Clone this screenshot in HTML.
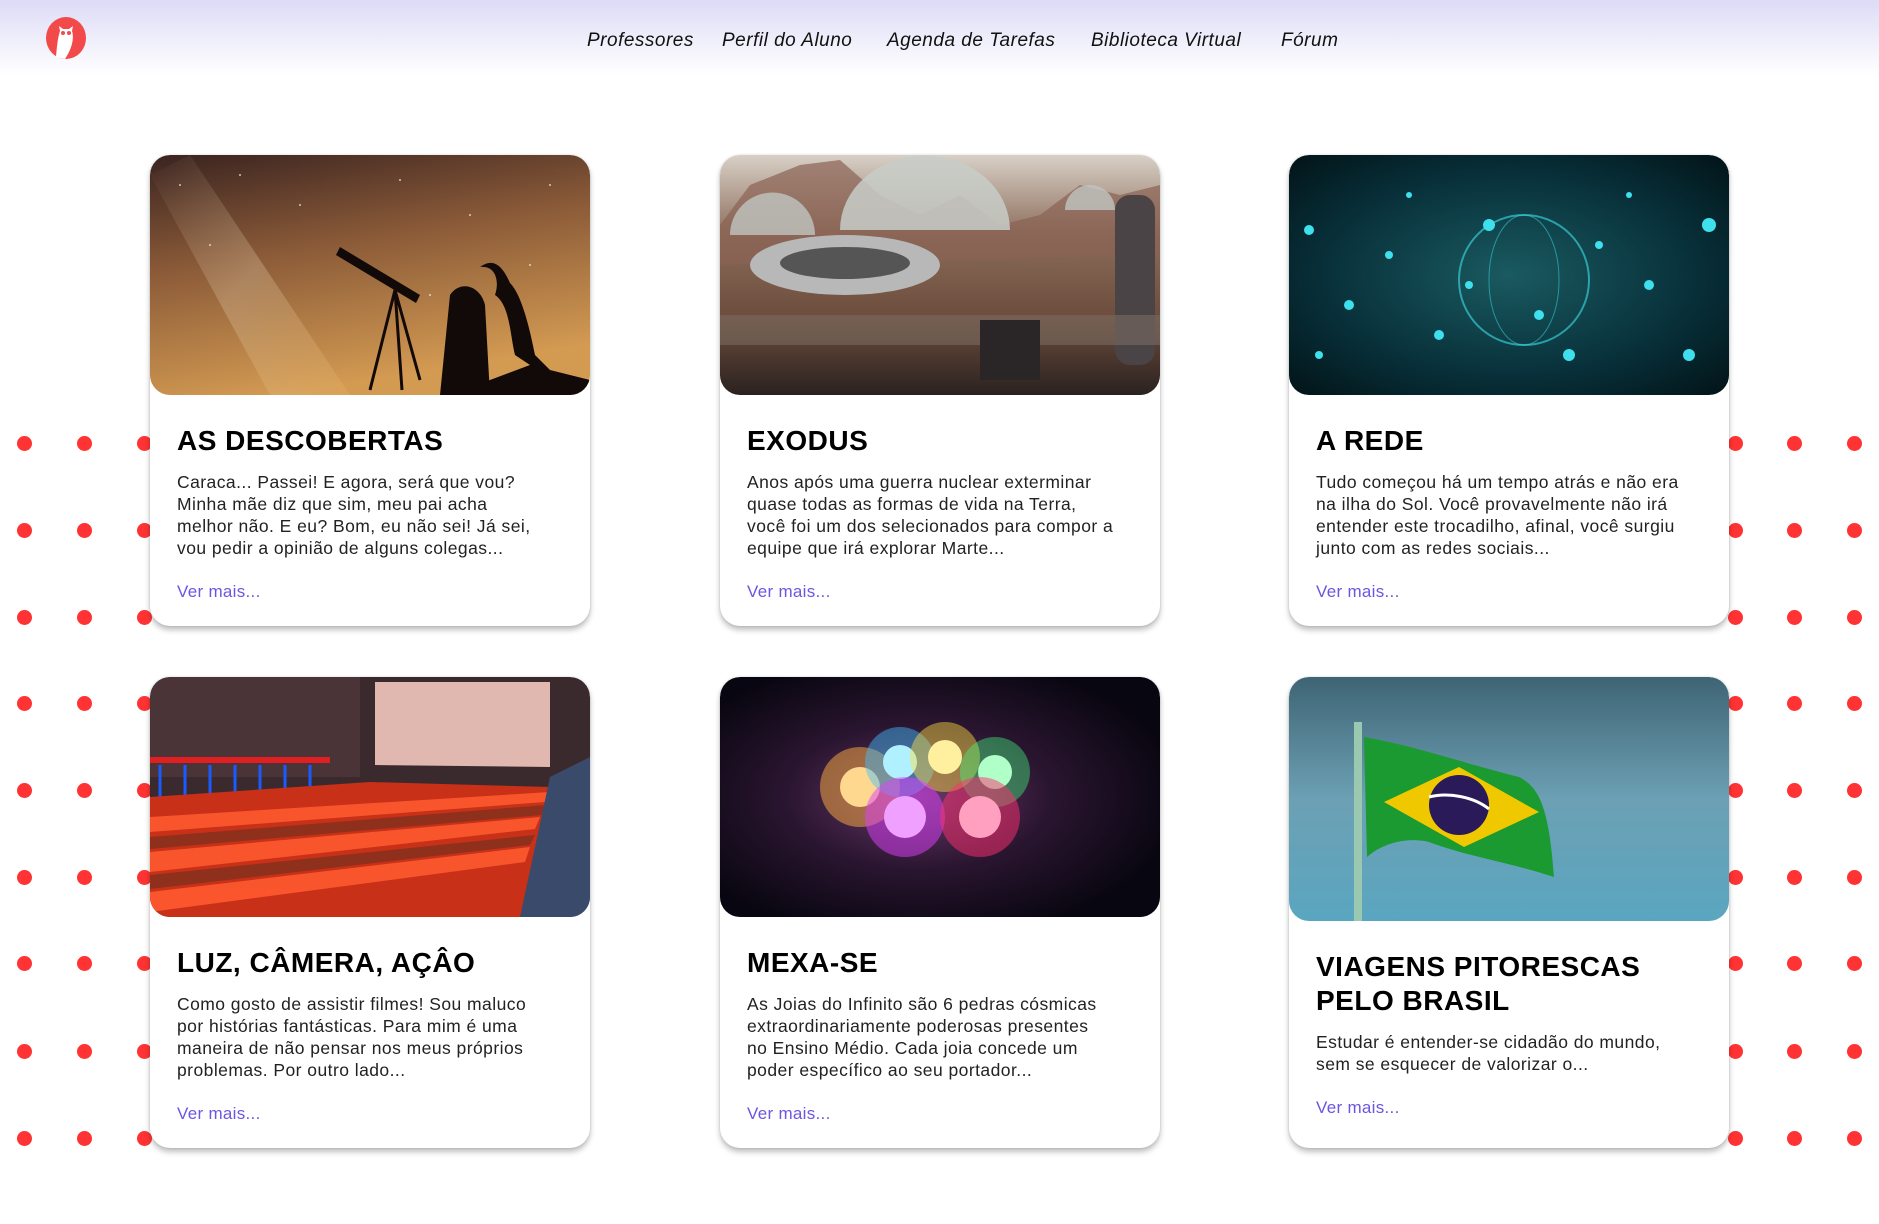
<!DOCTYPE html>
<html><head><meta charset="utf-8"><style>
*{margin:0;padding:0;box-sizing:border-box}
body{width:1879px;height:1224px;overflow:hidden;background:#fff;font-family:"Liberation Sans",sans-serif;position:relative}
.hdr{position:absolute;left:0;top:0;width:1879px;height:75px;background:linear-gradient(#dddbf6,#fff)}
.nav a{position:absolute;top:30px;font-size:19px;font-style:italic;color:#111;text-decoration:none;white-space:nowrap;letter-spacing:.5px}
.dot{position:absolute;width:15px;height:15px;border-radius:50%;background:#ff3333}
.card{position:absolute;width:440px;height:471px;background:#fff;border-radius:20px;box-shadow:0 4px 6px rgba(0,0,0,.25),0 0 2px rgba(0,0,0,.15);overflow:hidden}
.card svg{display:block;border-radius:20px}
.card h2{margin:29px 27px 0;font-size:28px;line-height:34px;font-weight:bold;color:#000;letter-spacing:.5px}
.card p{margin:13px 46px 0 27px;font-size:17.5px;line-height:22px;color:#222;letter-spacing:.45px}
.card .v{margin:22px 27px 22px;font-size:17px;line-height:22px;color:#6e55e0;letter-spacing:.3px}
</style></head><body>
<div class="hdr"></div>
<svg style="position:absolute;left:45px;top:17px" width="42" height="44" viewBox="0 0 42 44">
<ellipse cx="21" cy="21" rx="20" ry="21" fill="#f24a4a"/>
<path d="M11 40 C12 28 13 20 15 14 L14 9 L18 12 L24 12 L28 9 L27 14 C29 20 28 30 20 42 Z" fill="#fff"/>
<circle cx="18" cy="16" r="2" fill="#f24a4a"/><circle cx="24" cy="16" r="2" fill="#f24a4a"/>
</svg>
<div class="nav">
<a style="left:587px">Professores</a>
<a style="left:722px">Perfil do Aluno</a>
<a style="left:887px">Agenda de Tarefas</a>
<a style="left:1091px">Biblioteca Virtual</a>
<a style="left:1281px">Fórum</a>
</div>

<div id="dots">
<div class="dot" style="left:17px;top:436px"></div><div class="dot" style="left:77px;top:436px"></div><div class="dot" style="left:137px;top:436px"></div>
<div class="dot" style="left:17px;top:523px"></div><div class="dot" style="left:77px;top:523px"></div><div class="dot" style="left:137px;top:523px"></div>
<div class="dot" style="left:17px;top:610px"></div><div class="dot" style="left:77px;top:610px"></div><div class="dot" style="left:137px;top:610px"></div>
<div class="dot" style="left:17px;top:696px"></div><div class="dot" style="left:77px;top:696px"></div><div class="dot" style="left:137px;top:696px"></div>
<div class="dot" style="left:17px;top:783px"></div><div class="dot" style="left:77px;top:783px"></div><div class="dot" style="left:137px;top:783px"></div>
<div class="dot" style="left:17px;top:870px"></div><div class="dot" style="left:77px;top:870px"></div><div class="dot" style="left:137px;top:870px"></div>
<div class="dot" style="left:17px;top:956px"></div><div class="dot" style="left:77px;top:956px"></div><div class="dot" style="left:137px;top:956px"></div>
<div class="dot" style="left:17px;top:1044px"></div><div class="dot" style="left:77px;top:1044px"></div><div class="dot" style="left:137px;top:1044px"></div>
<div class="dot" style="left:17px;top:1131px"></div><div class="dot" style="left:77px;top:1131px"></div><div class="dot" style="left:137px;top:1131px"></div>
<div class="dot" style="left:1728px;top:436px"></div><div class="dot" style="left:1787px;top:436px"></div><div class="dot" style="left:1847px;top:436px"></div>
<div class="dot" style="left:1728px;top:523px"></div><div class="dot" style="left:1787px;top:523px"></div><div class="dot" style="left:1847px;top:523px"></div>
<div class="dot" style="left:1728px;top:610px"></div><div class="dot" style="left:1787px;top:610px"></div><div class="dot" style="left:1847px;top:610px"></div>
<div class="dot" style="left:1728px;top:696px"></div><div class="dot" style="left:1787px;top:696px"></div><div class="dot" style="left:1847px;top:696px"></div>
<div class="dot" style="left:1728px;top:783px"></div><div class="dot" style="left:1787px;top:783px"></div><div class="dot" style="left:1847px;top:783px"></div>
<div class="dot" style="left:1728px;top:870px"></div><div class="dot" style="left:1787px;top:870px"></div><div class="dot" style="left:1847px;top:870px"></div>
<div class="dot" style="left:1728px;top:956px"></div><div class="dot" style="left:1787px;top:956px"></div><div class="dot" style="left:1847px;top:956px"></div>
<div class="dot" style="left:1728px;top:1044px"></div><div class="dot" style="left:1787px;top:1044px"></div><div class="dot" style="left:1847px;top:1044px"></div>
<div class="dot" style="left:1728px;top:1131px"></div><div class="dot" style="left:1787px;top:1131px"></div><div class="dot" style="left:1847px;top:1131px"></div>
</div>

<!-- Card 1 -->
<div class="card" style="left:150px;top:155px">
<svg width="440" height="240" viewBox="0 0 440 240" preserveAspectRatio="none">
<defs><linearGradient id="g1" x1="0" y1="0" x2="0.3" y2="1"><stop offset="0" stop-color="#3a2320"/><stop offset=".45" stop-color="#8a5a38"/><stop offset="1" stop-color="#d39a52"/></linearGradient>
<linearGradient id="mw" x1="0" y1="0" x2="1" y2="1"><stop offset="0" stop-color="#c8b090" stop-opacity=".0"/><stop offset=".5" stop-color="#d8c0a0" stop-opacity=".35"/><stop offset="1" stop-color="#f0c070" stop-opacity=".2"/></linearGradient></defs>
<rect width="440" height="240" fill="url(#g1)"/>
<path d="M0 20 L120 240 L200 240 L40 0 Z" fill="url(#mw)"/>
<g fill="#fff" opacity=".7"><circle cx="30" cy="30" r="1"/><circle cx="90" cy="20" r="1"/><circle cx="150" cy="50" r="1"/><circle cx="250" cy="25" r="1"/><circle cx="320" cy="60" r="1"/><circle cx="400" cy="30" r="1"/><circle cx="380" cy="110" r="1"/><circle cx="60" cy="90" r="1"/><circle cx="200" cy="100" r="1"/><circle cx="280" cy="140" r="1"/></g>
<path d="M190 92 L270 140 L266 148 L186 100 Z" fill="#120a08"/>
<path d="M245 135 L220 235 M245 135 L252 235 M245 135 L270 225" stroke="#120a08" stroke-width="3"/>
<path d="M330 112 C345 110 350 125 345 140 C360 150 360 180 365 200 L380 210 L300 240 L440 240 L440 225 L400 215 L385 200 C380 175 372 140 360 128 C350 105 340 105 330 112 Z" fill="#120a08"/>
<path d="M300 140 C310 125 330 130 335 150 L340 240 L290 240 Z" fill="#120a08"/>
</svg>
<h2>AS DESCOBERTAS</h2>
<p>Caraca... Passei! E agora, será que vou? Minha mãe diz que sim, meu pai acha melhor não. E eu? Bom, eu não sei! Já sei, vou pedir a opinião de alguns colegas...</p>
<div class="v">Ver mais...</div>
</div>

<!-- Card 2 -->
<div class="card" style="left:720px;top:155px">
<svg width="440" height="240" viewBox="0 0 440 240" preserveAspectRatio="none">
<defs><linearGradient id="g2" x1="0" y1="0" x2="0" y2="1"><stop offset="0" stop-color="#d8d0c6"/><stop offset=".35" stop-color="#8a6a58"/><stop offset=".7" stop-color="#6a4a3a"/><stop offset="1" stop-color="#2a2220"/></linearGradient></defs>
<rect width="440" height="240" fill="url(#g2)"/>
<path d="M0 70 L30 30 L80 10 L120 5 L160 40 L200 60 L240 40 L280 70 L320 60 L360 30 L400 40 L440 30 L440 100 L0 110 Z" fill="#8a6254" opacity=".7"/>
<ellipse cx="125" cy="110" rx="95" ry="30" fill="#b8b8b8"/><ellipse cx="125" cy="108" rx="65" ry="16" fill="#555"/>
<path d="M120 75 A80 70 0 0 1 290 75 Z" fill="#c8ccc8" opacity=".85"/>
<path d="M10 80 A42 42 0 0 1 95 80 Z" fill="#c0c4c0" opacity=".8"/>
<path d="M345 55 A25 25 0 0 1 395 55 Z" fill="#c0c4c0" opacity=".8"/>
<rect x="395" y="40" width="40" height="170" rx="15" fill="#4a4446"/>
<rect x="0" y="160" width="440" height="30" fill="#7a6a60" opacity=".6"/>
<rect x="260" y="165" width="60" height="60" fill="#2a2628"/>
</svg>
<h2>EXODUS</h2>
<p>Anos após uma guerra nuclear exterminar quase todas as formas de vida na Terra, você foi um dos selecionados para compor a equipe que irá explorar Marte...</p>
<div class="v">Ver mais...</div>
</div>

<!-- Card 3 -->
<div class="card" style="left:1289px;top:155px">
<svg width="440" height="240" viewBox="0 0 440 240" preserveAspectRatio="none">
<defs><radialGradient id="g3" cx=".5" cy=".5" r=".7"><stop offset="0" stop-color="#1a5a60"/><stop offset=".6" stop-color="#08303a"/><stop offset="1" stop-color="#021418"/></radialGradient></defs>
<rect width="440" height="240" fill="url(#g3)"/>
<circle cx="235" cy="125" r="65" fill="none" stroke="#3ee0e8" stroke-width="2" opacity=".6"/>
<ellipse cx="235" cy="125" rx="35" ry="65" fill="none" stroke="#3ee0e8" stroke-width="1" opacity=".5"/>
<g fill="#3ee0ee"><circle cx="20" cy="75" r="5"/><circle cx="60" cy="150" r="5"/><circle cx="100" cy="100" r="4"/><circle cx="150" cy="180" r="5"/><circle cx="200" cy="70" r="6"/><circle cx="280" cy="200" r="6"/><circle cx="310" cy="90" r="4"/><circle cx="360" cy="130" r="5"/><circle cx="400" cy="200" r="6"/><circle cx="420" cy="70" r="7"/><circle cx="180" cy="130" r="4"/><circle cx="250" cy="160" r="5"/><circle cx="340" cy="40" r="3"/><circle cx="30" cy="200" r="4"/><circle cx="120" cy="40" r="3"/></g>
</svg>
<h2>A REDE</h2>
<p>Tudo começou há um tempo atrás e não era na ilha do Sol. Você provavelmente não irá entender este trocadilho, afinal, você surgiu junto com as redes sociais...</p>
<div class="v">Ver mais...</div>
</div>

<!-- Card 4 -->
<div class="card" style="left:150px;top:677px">
<svg width="440" height="240" viewBox="0 0 440 240" preserveAspectRatio="none">
<rect width="440" height="240" fill="#3a2a2e"/>
<rect x="0" y="0" width="210" height="100" fill="#4a3438"/>
<path d="M225 5 L400 5 L400 90 L225 88 Z" fill="#e0b8b0"/>
<rect x="0" y="80" width="180" height="6" fill="#e02020"/>
<g stroke="#1a5aff" stroke-width="3"><path d="M10 88 V120 M35 88 V120 M60 88 V118 M85 88 V118 M110 88 V115 M135 88 V115 M160 88 V112"/></g>
<path d="M0 120 L220 105 L400 110 L380 240 L0 240 Z" fill="#c83018"/>
<g fill="#ff5a30" opacity=".9"><path d="M0 140 L400 115 L395 125 L0 155 Z"/><path d="M0 175 L390 140 L385 152 L0 195 Z"/><path d="M0 215 L380 170 L375 185 L0 235 Z"/></g>
<g fill="#6a3020" opacity=".6"><path d="M0 160 L395 128 L392 138 L0 172Z"/><path d="M0 198 L385 158 L380 168 L0 212Z"/></g>
<path d="M400 100 L440 80 L440 240 L370 240 Z" fill="#3a4a6a"/>
</svg>
<h2>LUZ, CÂMERA, AÇÂO</h2>
<p>Como gosto de assistir filmes! Sou maluco por histórias fantásticas. Para mim é uma maneira de não pensar nos meus próprios problemas. Por outro lado...</p>
<div class="v">Ver mais...</div>
</div>

<!-- Card 5 -->
<div class="card" style="left:720px;top:677px">
<svg width="440" height="240" viewBox="0 0 440 240" preserveAspectRatio="none">
<defs><radialGradient id="g5" cx=".45" cy=".5" r=".6"><stop offset="0" stop-color="#6a3a6a"/><stop offset=".5" stop-color="#2a1530"/><stop offset="1" stop-color="#080610"/></radialGradient></defs>
<rect width="440" height="240" fill="url(#g5)"/>
<circle cx="140" cy="110" r="40" fill="#ffb040" opacity=".5"/><circle cx="140" cy="110" r="20" fill="#ffd890"/>
<circle cx="180" cy="85" r="35" fill="#40c0ff" opacity=".45"/><circle cx="180" cy="85" r="17" fill="#b0f0ff"/>
<circle cx="225" cy="80" r="35" fill="#ffe040" opacity=".45"/><circle cx="225" cy="80" r="17" fill="#fff0a0"/>
<circle cx="275" cy="95" r="35" fill="#40ff80" opacity=".4"/><circle cx="275" cy="95" r="17" fill="#b0ffc8"/>
<circle cx="185" cy="140" r="40" fill="#e040ff" opacity=".5"/><circle cx="185" cy="140" r="21" fill="#f0a0ff"/>
<circle cx="260" cy="140" r="40" fill="#ff3070" opacity=".5"/><circle cx="260" cy="140" r="21" fill="#ffa0c0"/>
</svg>
<h2>MEXA-SE</h2>
<p>As Joias do Infinito são 6 pedras cósmicas extraordinariamente poderosas presentes no Ensino Médio. Cada joia concede um poder específico ao seu portador...</p>
<div class="v">Ver mais...</div>
</div>

<!-- Card 6 -->
<div class="card" style="left:1289px;top:677px">
<svg width="440" height="244" viewBox="0 0 440 244" preserveAspectRatio="none">
<defs><linearGradient id="g6" x1="0" y1="0" x2="0" y2="1"><stop offset="0" stop-color="#3e6474"/><stop offset=".5" stop-color="#6ca0b4"/><stop offset="1" stop-color="#5aa6c0"/></linearGradient></defs>
<rect width="440" height="244" fill="url(#g6)"/>
<rect x="65" y="45" width="8" height="199" fill="#9ac8b0"/>
<path d="M75 60 C130 70 170 85 230 100 C250 110 260 130 265 200 C220 185 180 180 140 165 C120 160 95 165 78 180 Z" fill="#1a9a30"/>
<path d="M95 125 L170 90 L250 135 L175 170 Z" fill="#f0c800"/>
<circle cx="170" cy="128" r="30" fill="#2a1a5a"/>
<path d="M140 120 C160 115 185 120 200 132" stroke="#fff" stroke-width="3" fill="none"/>
</svg>
<h2>VIAGENS PITORESCAS PELO BRASIL</h2>
<p>Estudar é entender-se cidadão do mundo, sem se esquecer de valorizar o...</p>
<div class="v">Ver mais...</div>
</div>
</body></html>
